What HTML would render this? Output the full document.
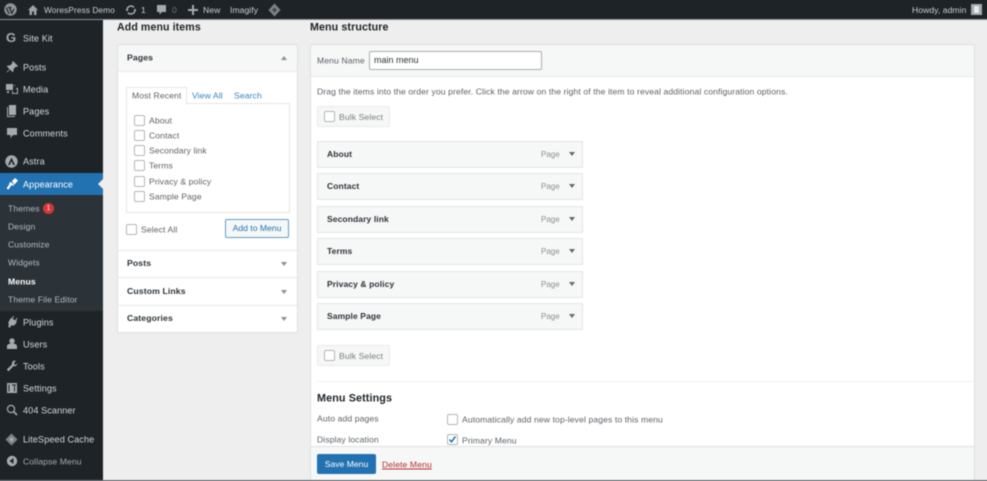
<!DOCTYPE html>
<html><head><meta charset="utf-8">
<style>
html,body{margin:0;padding:0;overflow:hidden;width:987px;height:481px}
body{position:relative;background:#eeeeee;font-family:"Liberation Sans",sans-serif;font-size:9px;color:#5c6268}
#w{position:absolute;left:0;top:0;width:987px;height:481px;filter:blur(.4px)}
.a{position:absolute;white-space:nowrap}
.t{position:absolute;white-space:nowrap;line-height:12px;transform:translateY(-5.5px)}
.m{color:#d5d8da;left:23px;font-size:9.1px;letter-spacing:.1px}
.s{color:#b4bbc0;left:8px;font-size:8.6px;letter-spacing:.1px}
.bar{color:#c9ced1;font-size:8.6px;letter-spacing:.05px;transform:translateY(-6px)}
.cb{position:absolute;width:9px;height:9px;border:1px solid #b4b6b9;border-radius:2px;background:#fff}
.it{position:absolute;left:317px;width:264px;height:25px;background:#f6f7f7;border:1px solid #e4e5e6}
.it b{position:absolute;left:9px;top:6px;font-size:8.500px;line-height:12px;color:#2c3338;letter-spacing:.1px}
.it i{position:absolute;left:223px;top:7px;font-style:normal;font-size:8px;line-height:12px;color:#8c8f94}
.it u{position:absolute;left:250.500px;top:10px;width:0;height:0;border:3px solid transparent;border-top:4px solid #646970;border-bottom:0}
.bulk{position:absolute;left:317px;width:71px;height:19px;background:#f6f7f7;border:1px solid #ebebec;border-radius:2px}
.bulk .cb{left:6px;top:4px}
.bulk span{position:absolute;left:21px;top:3.500px;line-height:12px;font-size:8.600px;color:#787c82;letter-spacing:.1px}
.sec{position:absolute;left:118px;width:179px;border-top:1px solid #e6e7e8}
.sec b{position:absolute;left:9px;font-size:8.700px;line-height:12px;color:#2c3338;letter-spacing:.1px}
.dn{position:absolute;left:281px;width:0;height:0;border:3px solid transparent;border-top:4px solid #8c8f94;border-bottom:0}
svg{position:absolute}
</style></head>
<body>
<div id="w">
<div class="a" style="left:-6px;top:-6px;width:1000px;height:495px;background:#eeeeee"></div>
<!-- sidebar -->
<div class="a" style="left:-6px;top:-6px;width:109px;height:495px;background:#1d2327"></div>
<div class="a" style="left:-6px;top:173px;width:109px;height:22px;background:#2271b1"></div>
<div class="a" style="left:-6px;top:195px;width:109px;height:116px;background:#2c3338"></div>
<div class="a" style="left:98px;top:179px;width:0;height:0;border:5px solid transparent;border-right:5px solid #eee;border-left:0"></div>

<!-- top bar -->
<div class="a" style="left:-6px;top:-6px;width:1000px;height:25px;background:#1d2327;border-bottom:1px solid #8c8f94"></div>
<svg style="left:4px;top:3px" width="13" height="13" viewBox="0 0 13 13"><circle cx="6.500" cy="6.500" r="6.200" fill="#8f9497"/><path d="M2.300 4.500L5 11M4.200 4.500h3.200M5.500 4.500L8 11M7.500 11L10 6" stroke="#1d2327" stroke-width="1.200" fill="none"/></svg>
<svg style="left:27px;top:4px" width="12" height="12" viewBox="0 0 12 12"><path d="M6 1L1 6h1.500v5h2.500V7.500h2V11h2.500V6H11z" fill="#9ea3a8"/></svg>
<div class="t bar" style="left:44px;top:10px;font-size:8.400px">WoresPress Demo</div>
<svg style="left:125px;top:4px" width="12" height="12" viewBox="0 0 12 12"><path d="M2 6a4 4 0 0 1 7-2.600M10 6a4 4 0 0 1-7 2.600" stroke="#a7aaad" stroke-width="1.500" fill="none"/><path d="M.5 5.500h3L2 7.500zM8.500 6.500h3L10 4.500z" fill="#a7aaad"/></svg>
<div class="t bar" style="left:141px;top:10px">1</div>
<svg style="left:156px;top:4px" width="11" height="12" viewBox="0 0 11 12"><path d="M1 1h9v7H6l-2.500 2.500V8H1z" fill="#a7aaad"/></svg>
<div class="t bar" style="left:172px;top:10px;color:#70767b">0</div>
<svg style="left:188px;top:5px" width="10" height="10" viewBox="0 0 10 10"><path d="M4 0h2v4h4v2H6v4H4V6H0V4h4z" fill="#a7aaad"/></svg>
<div class="t bar" style="left:203px;top:10px">New</div>
<div class="t bar" style="left:230px;top:10px">Imagify</div>
<svg style="left:268px;top:3px" width="13" height="14" viewBox="0 0 13 14"><path d="M6.500.5L12.500 7l-6 6.500L.5 7z" fill="#7c8184"/><path d="M6.500 4.500L9 7l-2.500 2.500L4 7z" fill="#1d2327" opacity=".6"/></svg>
<div class="t bar" style="left:912px;top:10px">Howdy, admin</div>
<div class="a" style="left:971px;top:4px;width:11px;height:11px;background:#a7aaad"></div>
<div class="a" style="left:974px;top:6px;width:5px;height:7px;background:#e8e8e8"></div>

<!-- sidebar icons -->
<div class="a" style="left:6px;top:31px;font-size:13px;line-height:14px;font-weight:bold;color:#a7aaad">G</div>
<svg style="left:6px;top:61px" width="12" height="12" viewBox="0 0 12 12"><path d="M7 0l5 5-1 1-1-.5L7.500 8 7.500 10.500 6.500 11 4 8.500 1 11.500 .5 11 3.500 8 1 5.500 1.500 4.500 4 4.500 6.500 2 6 1z" fill="#a7aaad"/></svg>
<svg style="left:6px;top:83px" width="12" height="12" viewBox="0 0 12 12"><path d="M0 1h7v6H0z" fill="#a7aaad"/><path d="M8 2h1v1H8zM10 5h2v6H6V8h1v2h4V6h-1z" fill="#a7aaad"/><path d="M1 8h2v2H1z" fill="#a7aaad"/></svg>
<svg style="left:6px;top:105px" width="12" height="12" viewBox="0 0 12 12"><path d="M3 0h7v10H3z" fill="#a7aaad"/><path d="M1 2h1v9h7v1H1z" fill="#a7aaad"/></svg>
<svg style="left:6px;top:127px" width="12" height="12" viewBox="0 0 12 12"><path d="M1 1h10v7H7l-2.500 3V8H1z" fill="#a7aaad"/></svg>
<svg style="left:5px;top:155px" width="13" height="13" viewBox="0 0 13 13"><circle cx="6.500" cy="6.500" r="6.200" fill="#a7aaad"/><path d="M6.500 2.500L3 10h1.800l1.700-3.800L8.200 10H10z" fill="#1d2327"/></svg>
<svg style="left:6px;top:178px" width="12" height="12" viewBox="0 0 12 12"><path d="M6 3l3-3 3 2.500-3 3.500-1 .5zM5 4L8 7 7 8 5.500 7 2.500 11.500.5 10.500 3.500 6 3 5z" fill="#fff"/></svg>
<svg style="left:6px;top:316px" width="12" height="12" viewBox="0 0 12 12"><path d="M3 3h1V0h1v3h3V0h1v3h1v3c0 2-1.500 3-3 3v3H5c0-1-.5-3-2-3.500z" fill="#a7aaad" transform="rotate(30 6 6)"/></svg>
<svg style="left:6px;top:338px" width="12" height="12" viewBox="0 0 12 12"><circle cx="6" cy="3" r="2.700" fill="#a7aaad"/><path d="M1 11V8c0-1.500 2-2.500 5-2.500s5 1 5 2.500v3z" fill="#a7aaad"/></svg>
<svg style="left:6px;top:360px" width="12" height="12" viewBox="0 0 12 12"><path d="M8.500 .5A3 3 0 0 0 6 4.500L.8 9.500l1.700 1.800L7.500 6a3 3 0 0 0 4-2.500L9.500 5 7.800 3.500 9.800 .8z" fill="#a7aaad"/></svg>
<svg style="left:7px;top:383px" width="10" height="10" viewBox="0 0 10 10"><path d="M0 0h10v10H0z" fill="#a7aaad"/><path d="M2 1.500v7M7.500 1.500v7M5 2h4" stroke="#1d2327" stroke-width="1"/></svg>
<svg style="left:6px;top:404px" width="12" height="12" viewBox="0 0 12 12"><circle cx="5" cy="5" r="3.600" stroke="#a7aaad" stroke-width="1.200" fill="none"/><path d="M7.500 7.500L11 11" stroke="#a7aaad" stroke-width="1.600"/></svg>
<svg style="left:5px;top:433px" width="13" height="13" viewBox="0 0 13 13"><path d="M6.500.5L12.500 6.500l-6 6-6-6z" fill="#7c8184"/><path d="M6.500 4L9 6.500 6.500 9 4 6.500z" fill="#a7aaad"/></svg>
<svg style="left:6px;top:455px" width="12" height="12" viewBox="0 0 12 12"><circle cx="6" cy="6" r="5.200" fill="#a7aaad"/><path d="M7.500 3v6L3.500 6z" fill="#1d2327"/></svg>

<div class="t m" style="top:38px">Site Kit</div>
<div class="t m" style="top:67px">Posts</div>
<div class="t m" style="top:89px">Media</div>
<div class="t m" style="top:111px">Pages</div>
<div class="t m" style="top:133px">Comments</div>
<div class="t m" style="top:161px">Astra</div>
<div class="t m" style="top:184px;color:#fff">Appearance</div>
<div class="t s" style="top:208px">Themes</div>
<div class="a" style="left:43px;top:203px;width:11px;height:11px;border-radius:50%;background:#d63638;color:#fff;font-size:7px;line-height:11px;text-align:center">1</div>
<div class="t s" style="top:226px">Design</div>
<div class="t s" style="top:244px">Customize</div>
<div class="t s" style="top:262px">Widgets</div>
<div class="t s" style="top:281px;color:#fff;font-weight:bold">Menus</div>
<div class="t s" style="top:299px">Theme File Editor</div>
<div class="t m" style="top:322px">Plugins</div>
<div class="t m" style="top:344px">Users</div>
<div class="t m" style="top:366px">Tools</div>
<div class="t m" style="top:388px">Settings</div>
<div class="t m" style="top:410px">404 Scanner</div>
<div class="t m" style="top:439px">LiteSpeed Cache</div>
<div class="t m" style="top:461px;color:#a7aaad;font-size:8.600px">Collapse Menu</div>

<!-- left column -->
<div class="t" style="left:117px;top:27px;font-size:10.600px;font-weight:bold;color:#1d2327;letter-spacing:.1px">Add menu items</div>
<div class="a" style="left:117px;top:44px;width:179px;height:287px;background:#fff;border:1px solid #dedfe0"></div>
<div class="a" style="left:118px;top:45px;width:179px;height:26px;background:#f6f7f7;border-bottom:1px solid #e9eaeb"></div>
<div class="t" style="left:127px;top:57px;font-size:8.700px;font-weight:bold;color:#2c3338;letter-spacing:.1px">Pages</div>
<div class="a" style="left:281px;top:56px;width:0;height:0;border:3px solid transparent;border-bottom:4px solid #8c8f94;border-top:0"></div>

<div class="a" style="left:126px;top:87px;width:59px;height:17px;background:#fff;border:1px solid #e4e5e6;border-bottom:0;z-index:2"></div>
<div class="t" style="left:132px;top:95px;font-size:8.600px;z-index:3;letter-spacing:.1px">Most Recent</div>
<div class="t" style="left:192px;top:95px;font-size:8.600px;color:#3582c4;letter-spacing:.1px">View All</div>
<div class="t" style="left:234px;top:95px;font-size:8.600px;color:#3582c4;letter-spacing:.1px">Search</div>
<div class="a" style="left:126px;top:103px;width:162px;height:108px;background:#fff;border:1px solid #e4e5e6"></div>

<div class="cb" style="left:134px;top:115px"></div><div class="t" style="left:149px;top:120px;font-size:8.600px;letter-spacing:.1px">About</div>
<div class="cb" style="left:134px;top:130px"></div><div class="t" style="left:149px;top:135px;font-size:8.600px;letter-spacing:.1px">Contact</div>
<div class="cb" style="left:134px;top:145px"></div><div class="t" style="left:149px;top:150px;font-size:8.600px;letter-spacing:.1px">Secondary link</div>
<div class="cb" style="left:134px;top:160px"></div><div class="t" style="left:149px;top:165px;font-size:8.600px;letter-spacing:.1px">Terms</div>
<div class="cb" style="left:134px;top:176px"></div><div class="t" style="left:149px;top:181px;font-size:8.600px;letter-spacing:.1px">Privacy &amp; policy</div>
<div class="cb" style="left:134px;top:191px"></div><div class="t" style="left:149px;top:196px;font-size:8.600px;letter-spacing:.1px">Sample Page</div>

<div class="cb" style="left:126px;top:224px"></div>
<div class="t" style="left:141px;top:229px;font-size:8.600px;letter-spacing:.1px">Select All</div>
<div class="a" style="left:225px;top:219px;width:62px;height:17px;background:#f6f7f7;border:1px solid #5f9bc9;border-radius:2px;color:#2271b1;font-size:8.600px;line-height:17px;text-align:center">Add to Menu</div>

<div class="sec" style="top:250px;height:26px"><b style="top:6px">Posts</b></div><div class="dn" style="top:262px"></div>
<div class="sec" style="top:277px;height:27px"><b style="top:7px">Custom Links</b></div><div class="dn" style="top:290px"></div>
<div class="sec" style="top:305px;height:26px"><b style="top:6px">Categories</b></div><div class="dn" style="top:317px"></div>

<!-- right column -->
<div class="t" style="left:310px;top:27px;font-size:10.700px;font-weight:bold;color:#1d2327;letter-spacing:.1px">Menu structure</div>
<div class="a" style="left:310px;top:44px;width:663px;height:440px;background:#fff;border:1px solid #dedfe0"></div>
<div class="a" style="left:311px;top:45px;width:663px;height:31px;background:#f6f7f7;border-bottom:1px solid #e9eaeb"></div>
<div class="t" style="left:317px;top:60px;font-size:8.600px;letter-spacing:.1px">Menu Name</div>
<div class="a" style="left:369px;top:51px;width:167px;height:17px;background:#fff;border:1px solid #a9acb0;border-radius:2px;padding-left:4px;font-size:9px;line-height:17px;color:#2c3338">main menu</div>
<div class="t" style="left:317px;top:91px;font-size:8.600px;letter-spacing:.105px">Drag the items into the order you prefer. Click the arrow on the right of the item to reveal additional configuration options.</div>

<div class="bulk" style="top:106px"><div class="cb"></div><span>Bulk Select</span></div>
<div class="it" style="top:141px"><b>About</b><i>Page</i><u></u></div>
<div class="it" style="top:173px"><b>Contact</b><i>Page</i><u></u></div>
<div class="it" style="top:206px"><b>Secondary link</b><i>Page</i><u></u></div>
<div class="it" style="top:238px"><b>Terms</b><i>Page</i><u></u></div>
<div class="it" style="top:271px"><b>Privacy &amp; policy</b><i>Page</i><u></u></div>
<div class="it" style="top:303px"><b>Sample Page</b><i>Page</i><u></u></div>
<div class="bulk" style="top:345px"><div class="cb"></div><span>Bulk Select</span></div>

<div class="a" style="left:317px;top:381px;width:657px;height:1px;background:#f0f0f1"></div>
<div class="t" style="left:317px;top:398px;font-size:10.800px;font-weight:bold;color:#1d2327;letter-spacing:.1px">Menu Settings</div>
<div class="t" style="left:317px;top:418px;font-size:8.600px;letter-spacing:.1px">Auto add pages</div>
<div class="cb" style="left:447px;top:414px"></div>
<div class="t" style="left:462px;top:419px;font-size:8.600px;letter-spacing:.1px">Automatically add new top-level pages to this menu</div>
<div class="t" style="left:317px;top:439px;font-size:8.600px;letter-spacing:.1px">Display location</div>
<div class="cb" style="left:447px;top:434px"></div>
<svg style="left:448px;top:435px" width="9" height="9" viewBox="0 0 9 9"><path d="M1.500 4.500L3.500 6.800 7.500 1.500" stroke="#2271b1" stroke-width="1.500" fill="none"/></svg>
<div class="t" style="left:462px;top:440px;font-size:8.600px;letter-spacing:.1px">Primary Menu</div>

<div class="a" style="left:311px;top:446px;width:663px;height:35px;background:#f6f7f7;border-top:1px solid #dedfe0"></div>
<div class="a" style="left:317px;top:454px;width:59px;height:20px;background:#2271b1;border-radius:2px;color:#fff;font-size:8.600px;line-height:20px;text-align:center">Save Menu</div>
<div class="t" style="left:382px;top:464px;font-size:8.600px;color:#b32d2e;text-decoration:underline;letter-spacing:.1px">Delete Menu</div>

<div class="a" style="left:-6px;top:480px;width:1000px;height:8px;background:#6d7378"></div>
</div>
</body></html>
